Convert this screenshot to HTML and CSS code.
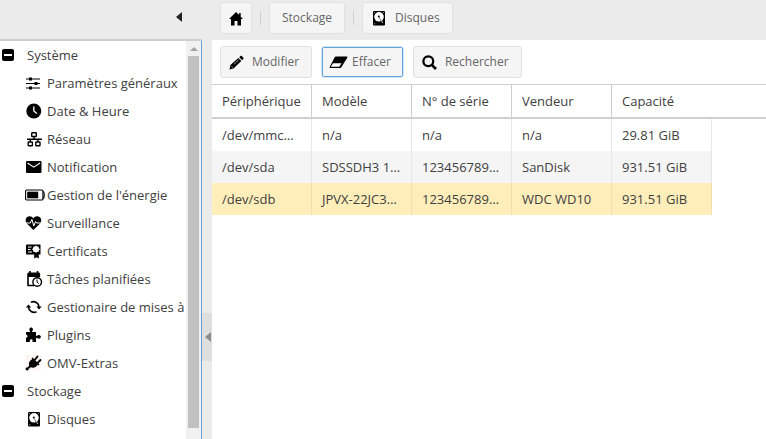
FILE: index.html
```html
<!DOCTYPE html>
<html lang="fr">
<head>
<meta charset="utf-8">
<title>Disques</title>
<link rel="stylesheet" href="styles.css">
</head>
<body>
<svg class="defs" aria-hidden="true">
  <symbol id="disk" viewBox="0 0 16 16">
    <rect x="2" y="1" width="12" height="14.500" rx="1"/>
    <circle cx="8" cy="6.800" r="4.800" fill="#fff"/>
    <circle cx="7.800" cy="6.500" r="1"/>
    <path d="M7.600 6.500 12.500 13l-1.500.6z"/>
    <path d="M9.500 9.500l2.500 3.500" stroke="#fff" stroke-width=".8"/>
    <path d="M3.200 13.800h1M3.200 2.500h.8M12 2.500h.8" stroke="#fff" stroke-width=".7"/>
  </symbol>
  <symbol id="minus" viewBox="0 0 12 12">
    <rect width="12" height="12" rx="2"/>
    <path d="M2 5h8v2H2z" fill="#fff"/>
  </symbol>
</svg>
<div class="app">
  <aside class="sidebar">
    <header class="side-head">
      <button class="collapse" aria-label="Réduire le menu"><svg width="6" height="10" viewBox="0 0 6 10"><path d="M6 0v10L0 5z"/></svg></button>
    </header>
    <div class="side-body">
      <nav class="tree">
        <button class="group"><svg class="toggle"><use href="#minus"/></svg>Système</button>
        <a class="item" href="#"><svg class="icon" viewBox="0 0 16 16"><path d="M0 4h14M0 8.500h14M0 13h14" stroke="#000" stroke-width="1.200"/><path d="M3 2.500h3v3H3zM8.500 7h3v3h-3zM3 11.500h3v3H3z"/></svg>Paramètres généraux</a>
        <a class="item" href="#"><svg class="icon" viewBox="0 0 16 16"><circle cx="7.800" cy="8" r="7.500"/><path d="M7.800 3.500V8l3 2.400" fill="none" stroke="#fff" stroke-width="1.300"/></svg>Date &amp; Heure</a>
        <a class="item" href="#"><svg class="icon" viewBox="0 0 16 16"><g fill="none" stroke="#000" stroke-width="1.400"><rect x="5.700" y="1.700" width="4.600" height="3.800" rx=".6"/><rect x="2.200" y="11" width="4.200" height="3.800" rx=".6"/><rect x="9.800" y="11" width="4.200" height="3.800" rx=".6"/><path d="M8 5.500V8M1 8.200h15M4.300 8v3M11.900 8v3"/></g></svg>Réseau</a>
        <a class="item" href="#"><svg class="icon" viewBox="0 0 16 16"><rect y="2" width="15.500" height="12" rx="1"/><path d="M1.500 4 7.800 8.200 14 4" fill="none" stroke="#fff" stroke-width="1.100"/></svg>Notification</a>
        <a class="item" href="#"><svg class="icon" viewBox="0 0 16 16"><rect x="-.4" y="3" width="17.300" height="10" rx="1" fill="none" stroke="#000" stroke-width="1.100"/><path d="M1.200 4.700h11v6.600h-11z"/><path d="M17 4.200c1.600.8 1.800 6.800 0 7.600" fill="none" stroke="#000" stroke-width="1.200"/></svg>Gestion de l'énergie</a>
        <a class="item" href="#"><svg class="icon" viewBox="0 0 16 16"><path d="M7.300 15 .8 8.600C-1.500 5.500-.2 1.300 3.500 1.300c1.800 0 3 .9 3.800 2.200C8.100 2.200 9.500 1.300 11.200 1.300c3.700 0 5.300 4 3 7.300z"/><path d="M0 8h4.300l1.600-3.700L7.800 11l1.700-4.500L10.500 8H15" fill="none" stroke="#fff" stroke-width="1"/></svg>Surveillance</a>
        <a class="item" href="#"><svg class="icon" viewBox="0 0 16 16"><path d="M1 1.500h13.500v10H12.800V15.500l-2.300-1.300-2.300 1.300v-4H1a1 1 0 0 1-1-1v-8a1 1 0 0 1 1-1z"/><path d="M2 4h3.500M2 6.500h2.500M2 9h4" stroke="#fff" stroke-width="1.200"/><path d="M10 2.500l1.100 1.100 1.600-.2v1.600L14 6.200l-1.300 1.200v1.600l-1.600-.2L10 10 8.900 8.800l-1.600.2V7.400L6 6.200 7.300 5V3.400l1.600.2z" fill="#fff"/></svg>Certificats</a>
        <a class="item" href="#"><svg class="icon" viewBox="0 0 16 16"><path d="M2 1.500h11.500V6H2z"/><path d="M4 0v3M11.500 0v3" stroke="#000" stroke-width="1.600"/><path d="M8 14.500H2V3h11.300v3" fill="none" stroke="#000" stroke-width="1.600"/><circle cx="11.200" cy="11" r="4.300" fill="#fff" stroke="#000" stroke-width="1.400"/><path d="M11 8.500V11l1.700 1.500" fill="none" stroke="#000"/></svg>Tâches planifiées</a>
        <a class="item" href="#"><svg class="icon" viewBox="0 0 16 16"><path d="M5 3.300A5.500 5.500 0 0 1 13 8M10.500 12.700A5.500 5.500 0 0 1 2.500 8" fill="none" stroke="#000" stroke-width="1.600"/><path d="M10.300 7.500h5.400L13 10.500zM-.2 8.500h5.400L2.500 5.500z"/></svg>Gestionaire de mises à</a>
        <a class="item" href="#"><svg class="icon" viewBox="0 0 16 16"><path d="M0 5h4.200C3.700 4 3.200 3 3.400 2c.3-2 3.200-2 3.500 0 .2 1-.5 2-.9 3h4v4c1-.3 2-1 3-1 2.500.2 2.500 3.500 0 3.700-1 0-2-.7-3-.9V15H6.500c-.2-1.500.7-2-.8-2.800C4 12 3.500 13 4 15H0v-4c1-.6 1.600-1 1.500-2C1.500 8 .8 7.800 0 7.500z"/></svg>Plugins</a>
        <a class="item" href="#"><svg class="icon" viewBox="0 0 16 16"><path d="M-.5 0h15.500v15.500H-.5z" fill="#fcf5f4"/><path d="M9 4.500 11.500 1.500M12 7.500 14.500 5" stroke="#000" stroke-width="1.900" stroke-linecap="round"/><path d="M6.500 2.500l7 7-.9.900-1-.7c-1.500 2.900-4.500 3.600-7 2.500L3 13.800 1.700 12.500 3.300 10.200C2.200 7.600 4 5.200 6.200 4.200l-.5-.9z"/><circle cx="1.200" cy="13.800" r="1.600"/></svg>OMV-Extras</a>
        <button class="group"><svg class="toggle"><use href="#minus"/></svg>Stockage</button>
        <a class="item" href="#"><svg class="icon"><use href="#disk"/></svg>Disques</a>
      </nav>
      <div class="scroll" aria-hidden="true">
        <svg width="8" height="4" viewBox="0 0 8 4"><path d="M4 0l4 4H0z"/></svg>
        <div class="thumb"></div>
      </div>
    </div>
  </aside>
  <div class="splitter">
    <button class="grip" aria-label="Masquer le panneau"><svg width="6" height="10" viewBox="0 0 6 10"><path d="M6 0v10L0 5z"/></svg></button>
  </div>
  <main class="main">
    <nav class="crumbs">
      <button class="btn home" aria-label="Accueil"><svg class="icon" viewBox="0 0 16 16"><path d="M8 2 1 9h2v6.500h3.500V11h3v4.500H13V9h2l-2.300-2.300V3h-1.600v2.100z"/></svg></button>
      <span class="sep"></span>
      <button class="btn text">Stockage</button>
      <span class="sep"></span>
      <button class="btn">
        <svg class="icon"><use href="#disk"/></svg>Disques</button>
    </nav>
    <section class="panel">
      <div class="toolbar">
        <button class="btn"><svg class="icon" viewBox="0 0 16 16"><path d="M.5 15.500l.9-4.400L9.300 4l3 3-7.800 7.600zM10.200 3.200l1.100-1c.6-.5 1.100-.5 1.700 0l1.200 1.200c.6.6.6 1.100 0 1.700l-1.100 1.100z"/><path d="M2.300 12l1.700 1.700M5 10.200l4.500-4.200" stroke="#fff" stroke-width=".6"/></svg>Modifier</button>
        <button class="btn focus"><svg class="icon" viewBox="0 0 16 16"><path d="M6 2.500h10.500c.8 0 1.200.6.800 1.300l-6 9.400c-.3.600-.8.900-1.500.9H.5c-.8 0-1.100-.7-.7-1.300L4.500 3.500c.3-.6.800-1 1.500-1z"/><path d="M3 9.300h8.500l-2.200 3.500H.9z" fill="#fff"/></svg>Effacer</button>
        <button class="btn"><svg class="icon" viewBox="0 0 16 16"><circle cx="6.300" cy="7.300" r="4.900" fill="none" stroke="#000" stroke-width="2.300"/><path d="M9.800 10.900 14 15" stroke="#000" stroke-width="2.700"/></svg>Rechercher</button>
      </div>
      <table class="grid">
        <thead><tr><th>Périphérique</th><th>Modèle</th><th>N° de série</th><th>Vendeur</th><th>Capacité</th><th class="rest"></th></tr></thead>
        <tbody>
          <tr><td>/dev/mmc…</td><td>n/a</td><td>n/a</td><td>n/a</td><td>29.81 GiB</td></tr>
          <tr class="alt"><td>/dev/sda</td><td>SDSSDH3 1…</td><td>123456789…</td><td>SanDisk</td><td>931.51 GiB</td></tr>
          <tr class="selected"><td>/dev/sdb</td><td>JPVX-22JC3…</td><td>123456789…</td><td>WDC WD10</td><td>931.51 GiB</td></tr>
        </tbody>
      </table>
    </section>
  </main>
</div>
</body>
</html>
```
FILE: styles.css
```css
* { box-sizing: border-box; }
body {
  margin: 0;
  background: #ebebeb;
  color: #404040;
  font: 13px/20px "Open Sans", "Noto Sans", sans-serif;
}
button { font: inherit; color: inherit; border: 0; background: none; padding: 0; }
svg { display: block; flex: none; }
.defs { position: absolute; width: 0; height: 0; }
.app { display: flex; height: 100vh; overflow: hidden; }

.sidebar { flex: 0 0 202px; display: flex; flex-direction: column; }
.side-head {
  flex: 0 0 41px;
  display: flex;
  justify-content: flex-end;
  align-items: center;
  padding: 0 20px 5px 0;
  border-bottom: 2px solid #cfcfcf;
}
.collapse svg { fill: #222; }
.side-body {
  flex: 1;
  min-height: 0;
  display: flex;
  background: #fff;
  border-right: 1px solid #5fa2dd;
}
.tree { flex: 1; min-width: 0; overflow: hidden; }
.group, .item {
  display: flex;
  align-items: center;
  width: 100%;
  height: 28px;
  white-space: nowrap;
  color: inherit;
  text-decoration: none;
}
.group { padding-left: 2px; gap: 13px; }
.item { padding-left: 26px; gap: 5px; }
.toggle { width: 12px; height: 12px; }
.icon { width: 16px; height: 16px; overflow: visible; }
.scroll {
  flex: 0 0 15px;
  display: flex;
  flex-direction: column;
  align-items: center;
  gap: 5px;
  padding: 6px 0 11px;
  background: #f1f1f1;
}
.scroll svg { fill: #a3a3a3; }
.thumb { flex: 1; width: 11px; background: #c1c1c1; }

.splitter { flex: 0 0 10px; display: flex; padding-top: 313px; align-items: flex-start; }
.grip {
  width: 10px;
  height: 48px;
  display: flex;
  align-items: center;
  justify-content: flex-end;
  padding-right: 1px;
  background: #dedede;
}
.grip svg { fill: #8f8b89; }

.main { flex: 1; min-width: 0; display: flex; flex-direction: column; }
.crumbs { flex: 0 0 40px; display: flex; align-items: flex-start; gap: 8px; padding: 2px 8px; }
.sep { width: 1px; height: 14px; margin-top: 9px; background: #cfcfcf; }
.btn {
  display: flex;
  align-items: center;
  gap: 8px;
  height: 32px;
  padding: 0 12px 0 8px;
  font-size: 12px;
  color: #666;
  background: #f5f5f5;
  border: 1px solid #e1e1e1;
  border-radius: 3px;
}
.home { padding: 0 7px; }
.text { padding: 0 12px; }
.toolbar .btn { gap: 7px; }
.toolbar .focus { gap: 6px; border-color: #d5e4f1; box-shadow: inset 0 0 0 1px #5fa2dd; }
.panel { flex: 1; background: #fff; }
.toolbar { display: flex; gap: 9px; padding: 6px 8px; }

.grid { width: 100%; table-layout: fixed; border-collapse: separate; border-spacing: 0; }
.grid th {
  width: 100px;
  height: 35px;
  padding: 0 0 0 10px;
  text-align: left;
  font-weight: 400;
  white-space: nowrap;
  border: solid #cfcfcf;
  border-width: 1px 1px 2px 0;
}
.grid th:nth-last-child(-n+2) { border-right: 0; }
.grid .rest { width: auto; padding: 0; }
.grid td {
  height: 32px;
  padding: 0 0 0 10px;
  white-space: nowrap;
  border-right: 1px solid #e7e7e7;
}
.alt td { background: #f5f5f5; }
.selected td { background: #ffeeba; border-color: #efdfad; }
```
